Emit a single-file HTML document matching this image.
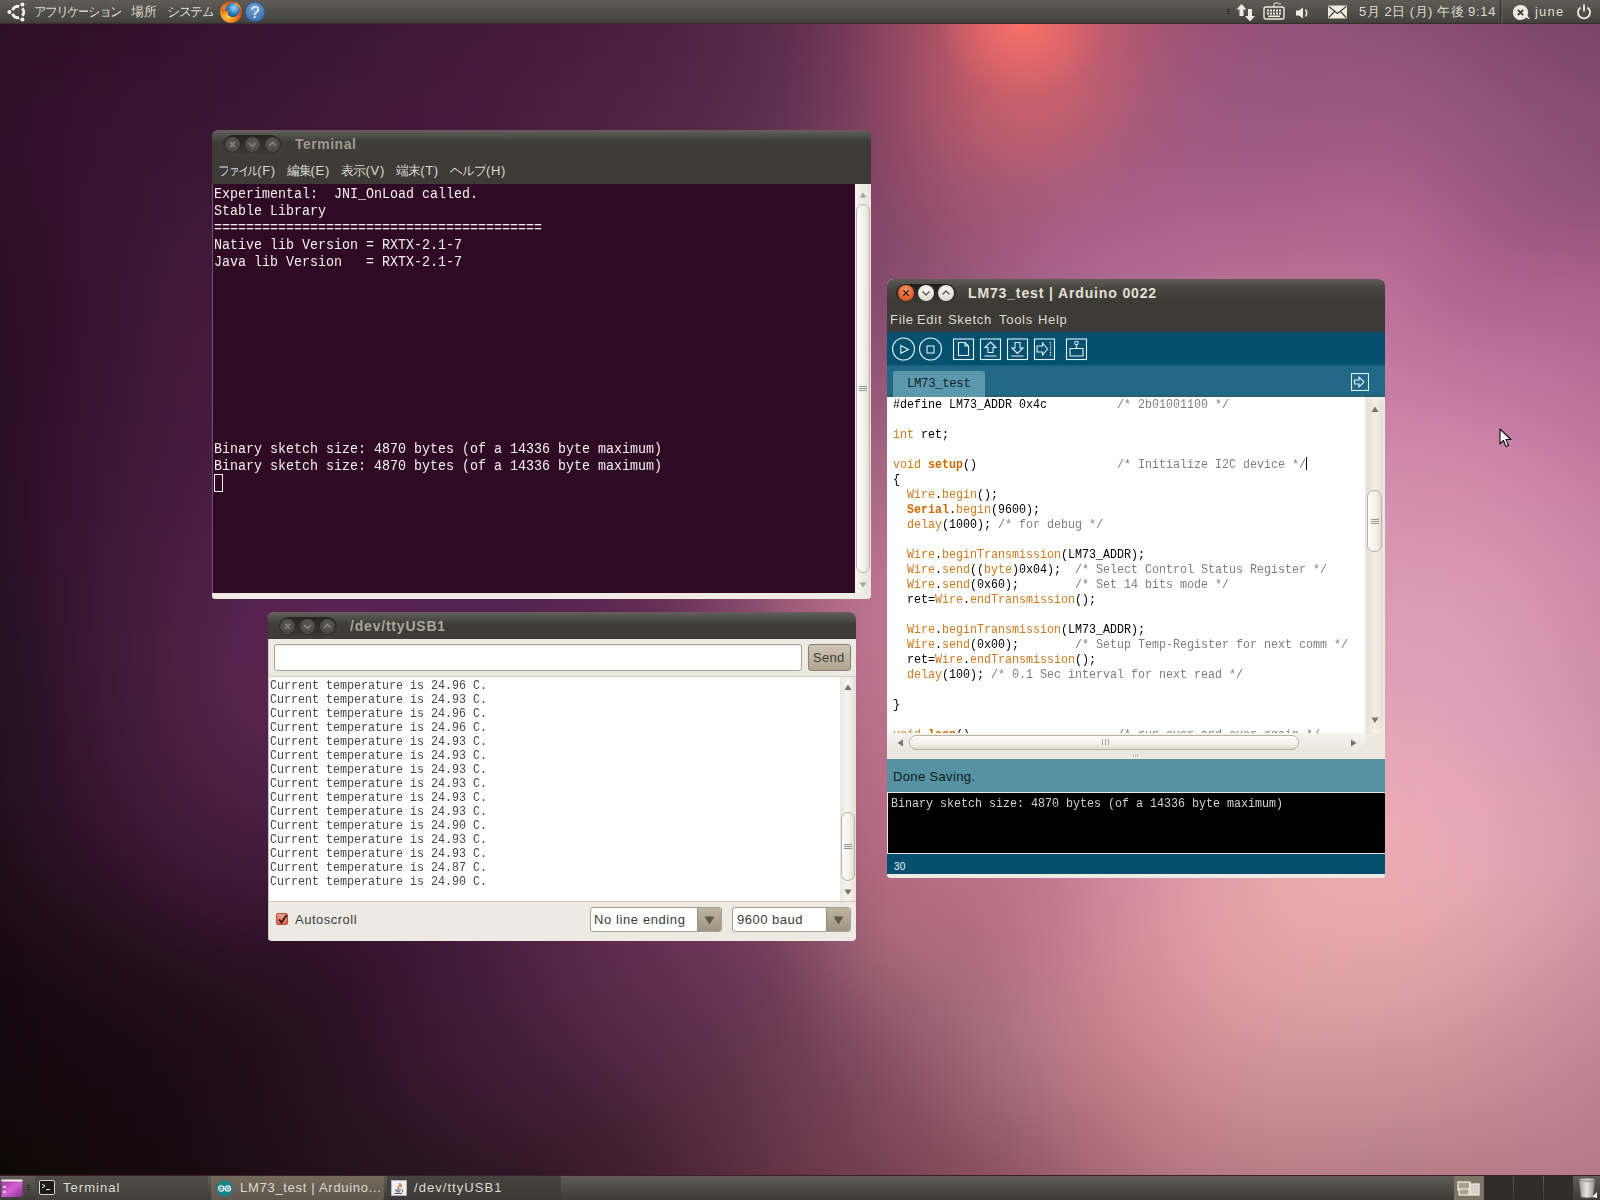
<!DOCTYPE html>
<html><head><meta charset="utf-8">
<style>
*{margin:0;padding:0;box-sizing:border-box}
html,body{width:1600px;height:1200px;overflow:hidden}
body{position:relative;font-family:"Liberation Sans",sans-serif;background:#3a1530}
.abs{position:absolute}
#bgw{position:absolute;left:0;top:0;width:1600px;height:1200px;overflow:hidden}
#bgi{position:absolute;left:-100px;top:-100px;width:1800px;height:1400px;filter:blur(30px)}
#bgi div{position:absolute;left:0;width:1800px;height:50px}
#glow{position:absolute;left:0;top:0;width:1600px;height:1200px;
background:radial-gradient(ellipse 85px 75px at 1022px 22px, rgba(252,115,105,0.9) 0%, rgba(245,110,105,0.45) 50%, rgba(230,100,100,0) 100%),
radial-gradient(ellipse 170px 150px at 1015px 35px, rgba(235,105,105,0.3) 0%, rgba(220,100,105,0.12) 55%, rgba(200,90,105,0) 100%)}
#toppanel{left:0;top:0;width:1600px;height:24px;background:linear-gradient(#5f5c56 0px,#44433d 22px,#3c3a36 23px,#3c2c33 23px,#3c2c33 24px);color:#dfdbd2;font-size:13px}
#botpanel{left:0;top:1176px;width:1600px;height:24px;background:linear-gradient(#655a5c 0px,#655a5c 1px,#5a5a52 2px,#3d3c37 100%);box-shadow:0 -1px 0 #3a2128;color:#dfdbd2;font-size:13px}
.win{position:absolute;border-radius:6px 6px 0 0;overflow:hidden}
.titlebar{position:absolute;left:0;top:0;right:0;background:linear-gradient(#6e5a62 0px,#675c5c 1px,#555850 3px,#4a4a45 8px,#3d3c37 12px,#3c3b36 100%)}
.btns{position:absolute;height:19px;border-radius:10px;background:linear-gradient(#262520,#3b3a35);}
.wbtn{position:absolute;width:15px;height:15px;border-radius:50%;top:2px}
.ttl{position:absolute;font-weight:bold;font-size:14px}
.ptxt{position:absolute;top:3px;font-size:13px;color:#dfdbd2;white-space:nowrap;line-height:17px;letter-spacing:0.7px}
.j{display:inline-block;font-style:normal;overflow:hidden;vertical-align:top}
.tb{position:absolute;top:0;height:24px;border-radius:2px}
.mtxt{position:absolute;top:32px;font-size:13px;color:#dcd8d0;white-space:nowrap;line-height:17px;letter-spacing:0.7px}
.ib{background:radial-gradient(circle at 50% 40%,#5a5852,#46443f);box-shadow:0 0 0 0.5px #2a2925}
.stxt{position:absolute;font-size:13px;color:#3c3c3c;white-space:nowrap;line-height:17px}
.code .k{color:#cc7a1e}.code .f{color:#cc7a1e}.code .b{color:#cc6a00;font-weight:bold}.code .c{color:#7e7e7e}
.mono{font-family:"Liberation Mono",monospace;white-space:pre}
</style></head><body>
<!--BG--><div id="bgw"><div id="bgi"><div style="top:-25px;background:linear-gradient(90deg,rgb(31,10,24) 0px,rgb(34,11,27) 50px,rgb(38,12,30) 100px,rgb(41,13,33) 150px,rgb(43,14,36) 200px,rgb(46,15,38) 250px,rgb(48,15,40) 300px,rgb(50,16,43) 350px,rgb(52,17,45) 400px,rgb(55,18,47) 450px,rgb(57,19,49) 500px,rgb(60,21,51) 550px,rgb(63,22,53) 600px,rgb(66,24,56) 650px,rgb(70,26,58) 700px,rgb(75,29,60) 750px,rgb(81,33,64) 800px,rgb(90,39,68) 850px,rgb(102,45,74) 900px,rgb(118,53,81) 950px,rgb(136,61,86) 1000px,rgb(154,69,91) 1050px,rgb(168,75,94) 1100px,rgb(173,78,97) 1150px,rgb(169,77,100) 1200px,rgb(160,75,102) 1250px,rgb(151,73,104) 1300px,rgb(143,71,105) 1350px,rgb(137,70,105) 1400px,rgb(131,68,104) 1450px,rgb(126,66,102) 1500px,rgb(121,63,100) 1550px,rgb(116,61,96) 1600px,rgb(111,58,92) 1650px,rgb(107,55,89) 1700px,rgb(104,53,87) 1750px,rgb(102,52,85) 1800px)"></div><div style="top:25px;background:linear-gradient(90deg,rgb(33,11,26) 0px,rgb(36,12,29) 50px,rgb(40,14,33) 100px,rgb(43,15,35) 150px,rgb(45,15,38) 200px,rgb(48,16,40) 250px,rgb(50,17,43) 300px,rgb(52,17,45) 350px,rgb(54,18,47) 400px,rgb(56,19,49) 450px,rgb(59,20,52) 500px,rgb(62,22,54) 550px,rgb(65,23,56) 600px,rgb(68,25,58) 650px,rgb(71,27,60) 700px,rgb(74,30,62) 750px,rgb(80,34,65) 800px,rgb(88,39,70) 850px,rgb(101,46,76) 900px,rgb(118,55,84) 950px,rgb(139,64,91) 1000px,rgb(161,74,95) 1050px,rgb(181,82,98) 1100px,rgb(187,85,101) 1150px,rgb(178,83,104) 1200px,rgb(165,80,107) 1250px,rgb(154,77,110) 1300px,rgb(145,75,111) 1350px,rgb(140,74,111) 1400px,rgb(135,73,111) 1450px,rgb(131,71,109) 1500px,rgb(126,68,106) 1550px,rgb(121,65,102) 1600px,rgb(116,62,98) 1650px,rgb(112,59,94) 1700px,rgb(109,57,91) 1750px,rgb(107,56,89) 1800px)"></div><div style="top:75px;background:linear-gradient(90deg,rgb(34,12,28) 0px,rgb(38,13,32) 50px,rgb(42,15,35) 100px,rgb(45,16,38) 150px,rgb(48,17,41) 200px,rgb(50,17,43) 250px,rgb(52,18,45) 300px,rgb(54,19,47) 350px,rgb(56,20,50) 400px,rgb(59,21,52) 450px,rgb(61,22,54) 500px,rgb(64,23,56) 550px,rgb(67,25,58) 600px,rgb(69,26,60) 650px,rgb(72,28,62) 700px,rgb(75,31,64) 750px,rgb(79,35,66) 800px,rgb(86,40,70) 850px,rgb(98,47,78) 900px,rgb(118,57,89) 950px,rgb(140,68,97) 1000px,rgb(166,78,99) 1050px,rgb(196,90,101) 1100px,rgb(203,93,104) 1150px,rgb(184,88,109) 1200px,rgb(166,83,112) 1250px,rgb(154,80,115) 1300px,rgb(147,79,117) 1350px,rgb(143,79,118) 1400px,rgb(140,78,117) 1450px,rgb(137,76,116) 1500px,rgb(133,74,112) 1550px,rgb(128,71,108) 1600px,rgb(122,67,104) 1650px,rgb(117,64,99) 1700px,rgb(114,62,97) 1750px,rgb(113,61,95) 1800px)"></div><div style="top:125px;background:linear-gradient(90deg,rgb(36,12,30) 0px,rgb(40,14,34) 50px,rgb(45,16,38) 100px,rgb(48,17,41) 150px,rgb(50,18,43) 200px,rgb(52,18,45) 250px,rgb(54,19,48) 300px,rgb(57,20,50) 350px,rgb(59,21,52) 400px,rgb(61,22,54) 450px,rgb(64,23,56) 500px,rgb(66,24,59) 550px,rgb(69,26,61) 600px,rgb(72,28,63) 650px,rgb(75,30,65) 700px,rgb(77,33,66) 750px,rgb(80,36,68) 800px,rgb(86,41,72) 850px,rgb(98,48,80) 900px,rgb(119,60,92) 950px,rgb(142,71,101) 1000px,rgb(167,81,102) 1050px,rgb(204,95,103) 1100px,rgb(210,98,106) 1150px,rgb(184,90,112) 1200px,rgb(165,86,117) 1250px,rgb(154,84,121) 1300px,rgb(149,84,123) 1350px,rgb(147,83,123) 1400px,rgb(147,83,123) 1450px,rgb(145,82,122) 1500px,rgb(141,79,119) 1550px,rgb(135,76,115) 1600px,rgb(130,73,111) 1650px,rgb(125,70,107) 1700px,rgb(122,68,104) 1750px,rgb(120,66,102) 1800px)"></div><div style="top:175px;background:linear-gradient(90deg,rgb(36,12,31) 0px,rgb(42,14,36) 50px,rgb(47,16,41) 100px,rgb(50,18,44) 150px,rgb(53,19,46) 200px,rgb(55,20,48) 250px,rgb(57,21,50) 300px,rgb(59,21,52) 350px,rgb(62,22,55) 400px,rgb(64,23,57) 450px,rgb(67,24,59) 500px,rgb(69,25,61) 550px,rgb(71,27,63) 600px,rgb(75,30,65) 650px,rgb(77,33,67) 700px,rgb(79,35,69) 750px,rgb(82,38,71) 800px,rgb(88,43,75) 850px,rgb(100,51,82) 900px,rgb(121,62,94) 950px,rgb(145,73,102) 1000px,rgb(171,85,105) 1050px,rgb(196,95,106) 1100px,rgb(199,97,108) 1150px,rgb(181,92,113) 1200px,rgb(164,89,121) 1250px,rgb(156,89,127) 1300px,rgb(152,88,128) 1350px,rgb(153,87,128) 1400px,rgb(154,88,128) 1450px,rgb(153,87,127) 1500px,rgb(148,85,125) 1550px,rgb(142,81,121) 1600px,rgb(138,79,119) 1650px,rgb(135,78,117) 1700px,rgb(130,74,112) 1750px,rgb(127,71,108) 1800px)"></div><div style="top:225px;background:linear-gradient(90deg,rgb(36,12,31) 0px,rgb(42,14,36) 50px,rgb(47,16,41) 100px,rgb(51,18,45) 150px,rgb(54,20,48) 200px,rgb(57,21,50) 250px,rgb(60,22,53) 300px,rgb(62,23,55) 350px,rgb(64,23,57) 400px,rgb(67,24,59) 450px,rgb(68,25,61) 500px,rgb(70,26,62) 550px,rgb(73,28,64) 600px,rgb(76,31,67) 650px,rgb(79,34,70) 700px,rgb(82,37,72) 750px,rgb(86,41,75) 800px,rgb(92,46,79) 850px,rgb(104,54,86) 900px,rgb(123,64,96) 950px,rgb(144,75,104) 1000px,rgb(166,85,109) 1050px,rgb(181,92,111) 1100px,rgb(182,93,114) 1150px,rgb(172,91,119) 1200px,rgb(163,91,126) 1250px,rgb(159,92,131) 1300px,rgb(158,91,132) 1350px,rgb(159,91,132) 1400px,rgb(161,92,132) 1450px,rgb(160,92,132) 1500px,rgb(155,89,130) 1550px,rgb(148,84,126) 1600px,rgb(142,81,122) 1650px,rgb(138,79,119) 1700px,rgb(136,77,116) 1750px,rgb(134,75,113) 1800px)"></div><div style="top:275px;background:linear-gradient(90deg,rgb(34,12,29) 0px,rgb(40,14,35) 50px,rgb(46,16,40) 100px,rgb(51,18,44) 150px,rgb(55,20,48) 200px,rgb(59,22,52) 250px,rgb(62,23,55) 300px,rgb(65,24,57) 350px,rgb(67,24,59) 400px,rgb(68,25,61) 450px,rgb(70,25,62) 500px,rgb(71,26,63) 550px,rgb(73,28,65) 600px,rgb(76,31,68) 650px,rgb(80,35,71) 700px,rgb(84,39,74) 750px,rgb(90,44,78) 800px,rgb(97,50,83) 850px,rgb(109,57,90) 900px,rgb(124,66,99) 950px,rgb(140,75,106) 1000px,rgb(153,82,111) 1050px,rgb(164,88,117) 1100px,rgb(168,91,125) 1150px,rgb(165,92,131) 1200px,rgb(165,94,135) 1250px,rgb(166,96,136) 1300px,rgb(166,96,136) 1350px,rgb(168,96,136) 1400px,rgb(170,98,138) 1450px,rgb(169,98,139) 1500px,rgb(162,93,135) 1550px,rgb(154,88,130) 1600px,rgb(147,83,125) 1650px,rgb(142,80,120) 1700px,rgb(143,80,119) 1750px,rgb(142,80,118) 1800px)"></div><div style="top:325px;background:linear-gradient(90deg,rgb(32,11,27) 0px,rgb(38,13,32) 50px,rgb(43,15,37) 100px,rgb(50,18,43) 150px,rgb(56,20,48) 200px,rgb(61,22,53) 250px,rgb(65,24,57) 300px,rgb(68,25,60) 350px,rgb(69,25,62) 400px,rgb(70,25,63) 450px,rgb(71,26,64) 500px,rgb(71,26,65) 550px,rgb(73,28,66) 600px,rgb(77,32,69) 650px,rgb(81,36,73) 700px,rgb(87,41,77) 750px,rgb(94,47,82) 800px,rgb(102,54,88) 850px,rgb(113,61,94) 900px,rgb(125,69,101) 950px,rgb(136,75,107) 1000px,rgb(146,81,113) 1050px,rgb(158,89,124) 1100px,rgb(166,95,134) 1150px,rgb(168,98,140) 1200px,rgb(172,101,143) 1250px,rgb(175,104,143) 1300px,rgb(177,105,143) 1350px,rgb(179,105,144) 1400px,rgb(181,107,146) 1450px,rgb(180,106,147) 1500px,rgb(170,99,140) 1550px,rgb(163,93,135) 1600px,rgb(161,91,132) 1650px,rgb(160,91,131) 1700px,rgb(157,89,128) 1750px,rgb(153,87,125) 1800px)"></div><div style="top:375px;background:linear-gradient(90deg,rgb(30,10,26) 0px,rgb(36,12,30) 50px,rgb(42,15,36) 100px,rgb(49,17,42) 150px,rgb(56,20,49) 200px,rgb(62,23,55) 250px,rgb(67,24,59) 300px,rgb(70,25,62) 350px,rgb(71,26,64) 400px,rgb(72,26,65) 450px,rgb(72,26,66) 500px,rgb(72,27,66) 550px,rgb(74,29,68) 600px,rgb(78,32,71) 650px,rgb(83,38,75) 700px,rgb(90,44,80) 750px,rgb(98,50,85) 800px,rgb(108,58,92) 850px,rgb(118,65,99) 900px,rgb(129,73,105) 950px,rgb(138,79,112) 1000px,rgb(148,86,119) 1050px,rgb(159,94,130) 1100px,rgb(169,101,141) 1150px,rgb(175,106,147) 1200px,rgb(180,109,149) 1250px,rgb(184,112,150) 1300px,rgb(187,114,151) 1350px,rgb(189,115,152) 1400px,rgb(190,115,153) 1450px,rgb(186,112,152) 1500px,rgb(176,104,144) 1550px,rgb(172,101,142) 1600px,rgb(173,101,141) 1650px,rgb(173,100,140) 1700px,rgb(169,97,136) 1750px,rgb(163,94,132) 1800px)"></div><div style="top:425px;background:linear-gradient(90deg,rgb(29,9,24) 0px,rgb(35,12,29) 50px,rgb(41,14,35) 100px,rgb(49,17,42) 150px,rgb(56,20,49) 200px,rgb(63,23,56) 250px,rgb(69,25,61) 300px,rgb(72,26,65) 350px,rgb(73,27,67) 400px,rgb(74,27,68) 450px,rgb(74,28,68) 500px,rgb(74,28,69) 550px,rgb(76,30,70) 600px,rgb(80,34,73) 650px,rgb(86,40,78) 700px,rgb(94,46,83) 750px,rgb(104,54,89) 800px,rgb(114,62,96) 850px,rgb(125,71,104) 900px,rgb(135,79,111) 950px,rgb(145,86,118) 1000px,rgb(155,93,127) 1050px,rgb(165,101,136) 1100px,rgb(174,107,145) 1150px,rgb(180,113,151) 1200px,rgb(186,117,154) 1250px,rgb(190,120,156) 1300px,rgb(194,122,157) 1350px,rgb(196,123,159) 1400px,rgb(196,122,159) 1450px,rgb(192,119,157) 1500px,rgb(186,114,153) 1550px,rgb(183,112,152) 1600px,rgb(181,110,150) 1650px,rgb(179,107,146) 1700px,rgb(175,104,142) 1750px,rgb(170,100,138) 1800px)"></div><div style="top:475px;background:linear-gradient(90deg,rgb(28,9,24) 0px,rgb(34,11,29) 50px,rgb(41,14,36) 100px,rgb(49,17,43) 150px,rgb(57,21,51) 200px,rgb(64,24,57) 250px,rgb(70,26,63) 300px,rgb(74,28,67) 350px,rgb(76,28,70) 400px,rgb(76,29,71) 450px,rgb(77,29,71) 500px,rgb(77,30,72) 550px,rgb(79,32,73) 600px,rgb(83,36,76) 650px,rgb(90,42,80) 700px,rgb(98,49,86) 750px,rgb(109,58,93) 800px,rgb(121,67,101) 850px,rgb(133,77,109) 900px,rgb(145,86,117) 950px,rgb(155,94,125) 1000px,rgb(164,101,134) 1050px,rgb(172,108,142) 1100px,rgb(179,114,149) 1150px,rgb(185,119,155) 1200px,rgb(190,123,158) 1250px,rgb(195,126,161) 1300px,rgb(199,129,163) 1350px,rgb(201,130,164) 1400px,rgb(201,130,164) 1450px,rgb(199,128,164) 1500px,rgb(197,126,162) 1550px,rgb(193,123,161) 1600px,rgb(189,119,157) 1650px,rgb(184,114,152) 1700px,rgb(180,110,147) 1750px,rgb(176,106,143) 1800px)"></div><div style="top:525px;background:linear-gradient(90deg,rgb(27,9,23) 0px,rgb(34,11,29) 50px,rgb(42,14,36) 100px,rgb(50,18,44) 150px,rgb(58,21,52) 200px,rgb(65,24,59) 250px,rgb(71,27,65) 300px,rgb(76,29,70) 350px,rgb(78,30,72) 400px,rgb(79,31,74) 450px,rgb(79,31,74) 500px,rgb(80,32,75) 550px,rgb(82,34,76) 600px,rgb(86,38,79) 650px,rgb(92,43,83) 700px,rgb(102,51,88) 750px,rgb(114,61,96) 800px,rgb(128,72,105) 850px,rgb(142,83,115) 900px,rgb(155,94,124) 950px,rgb(165,102,132) 1000px,rgb(173,109,140) 1050px,rgb(179,114,146) 1100px,rgb(184,119,153) 1150px,rgb(189,124,158) 1200px,rgb(194,128,162) 1250px,rgb(198,131,165) 1300px,rgb(202,134,167) 1350px,rgb(205,136,169) 1400px,rgb(207,137,170) 1450px,rgb(206,137,169) 1500px,rgb(205,135,168) 1550px,rgb(202,132,166) 1600px,rgb(197,127,162) 1650px,rgb(191,122,157) 1700px,rgb(186,117,153) 1750px,rgb(181,112,148) 1800px)"></div><div style="top:575px;background:linear-gradient(90deg,rgb(26,9,22) 0px,rgb(33,11,29) 50px,rgb(41,15,36) 100px,rgb(50,18,45) 150px,rgb(59,22,53) 200px,rgb(67,26,61) 250px,rgb(74,28,67) 300px,rgb(78,31,72) 350px,rgb(81,32,75) 400px,rgb(82,33,77) 450px,rgb(82,33,77) 500px,rgb(82,34,78) 550px,rgb(84,36,78) 600px,rgb(87,39,80) 650px,rgb(94,44,84) 700px,rgb(104,51,89) 750px,rgb(117,62,98) 800px,rgb(134,75,108) 850px,rgb(151,89,119) 900px,rgb(165,101,130) 950px,rgb(176,110,138) 1000px,rgb(181,115,145) 1050px,rgb(185,119,150) 1100px,rgb(188,123,155) 1150px,rgb(192,127,159) 1200px,rgb(196,132,164) 1250px,rgb(201,135,167) 1300px,rgb(205,139,170) 1350px,rgb(209,142,172) 1400px,rgb(211,143,174) 1450px,rgb(212,144,174) 1500px,rgb(211,143,173) 1550px,rgb(209,140,171) 1600px,rgb(204,135,167) 1650px,rgb(198,129,163) 1700px,rgb(192,123,158) 1750px,rgb(187,118,152) 1800px)"></div><div style="top:625px;background:linear-gradient(90deg,rgb(25,9,21) 0px,rgb(32,12,28) 50px,rgb(41,15,36) 100px,rgb(50,19,45) 150px,rgb(60,23,54) 200px,rgb(69,27,62) 250px,rgb(76,30,69) 300px,rgb(81,32,75) 350px,rgb(84,34,78) 400px,rgb(85,34,79) 450px,rgb(84,34,79) 500px,rgb(84,35,79) 550px,rgb(85,36,79) 600px,rgb(87,38,81) 650px,rgb(93,42,83) 700px,rgb(103,50,89) 750px,rgb(118,62,98) 800px,rgb(137,77,110) 850px,rgb(158,94,123) 900px,rgb(175,108,135) 950px,rgb(185,117,143) 1000px,rgb(189,120,148) 1050px,rgb(189,122,152) 1100px,rgb(190,124,155) 1150px,rgb(193,128,160) 1200px,rgb(197,133,164) 1250px,rgb(202,138,168) 1300px,rgb(207,143,172) 1350px,rgb(212,146,175) 1400px,rgb(214,149,177) 1450px,rgb(216,150,178) 1500px,rgb(215,149,178) 1550px,rgb(213,147,176) 1600px,rgb(209,142,172) 1650px,rgb(203,135,167) 1700px,rgb(197,129,162) 1750px,rgb(191,123,156) 1800px)"></div><div style="top:675px;background:linear-gradient(90deg,rgb(23,9,20) 0px,rgb(30,12,27) 50px,rgb(39,16,35) 100px,rgb(49,20,44) 150px,rgb(60,24,54) 200px,rgb(70,28,63) 250px,rgb(79,32,71) 300px,rgb(84,34,77) 350px,rgb(87,35,80) 400px,rgb(87,35,80) 450px,rgb(86,35,80) 500px,rgb(85,35,80) 550px,rgb(84,35,79) 600px,rgb(86,36,80) 650px,rgb(91,39,82) 700px,rgb(100,46,87) 750px,rgb(116,58,96) 800px,rgb(138,76,109) 850px,rgb(162,96,124) 900px,rgb(183,113,138) 950px,rgb(193,121,146) 1000px,rgb(192,121,149) 1050px,rgb(190,121,151) 1100px,rgb(190,123,154) 1150px,rgb(193,127,158) 1200px,rgb(198,133,163) 1250px,rgb(204,140,168) 1300px,rgb(209,146,173) 1350px,rgb(214,150,177) 1400px,rgb(218,154,180) 1450px,rgb(219,155,181) 1500px,rgb(218,154,181) 1550px,rgb(216,151,179) 1600px,rgb(211,146,175) 1650px,rgb(206,139,170) 1700px,rgb(200,133,163) 1750px,rgb(193,127,157) 1800px)"></div><div style="top:725px;background:linear-gradient(90deg,rgb(21,9,19) 0px,rgb(29,12,25) 50px,rgb(37,16,33) 100px,rgb(48,20,43) 150px,rgb(60,25,53) 200px,rgb(71,29,63) 250px,rgb(81,33,72) 300px,rgb(87,35,78) 350px,rgb(89,36,80) 400px,rgb(88,35,81) 450px,rgb(86,35,80) 500px,rgb(84,34,79) 550px,rgb(83,34,78) 600px,rgb(84,34,78) 650px,rgb(88,36,79) 700px,rgb(96,41,83) 750px,rgb(111,53,91) 800px,rgb(135,72,106) 850px,rgb(162,95,123) 900px,rgb(185,113,138) 950px,rgb(194,121,146) 1000px,rgb(191,119,147) 1050px,rgb(187,116,148) 1100px,rgb(188,119,151) 1150px,rgb(192,125,156) 1200px,rgb(198,133,162) 1250px,rgb(205,141,168) 1300px,rgb(212,148,173) 1350px,rgb(217,154,178) 1400px,rgb(221,158,181) 1450px,rgb(222,159,183) 1500px,rgb(221,158,184) 1550px,rgb(218,154,181) 1600px,rgb(213,148,176) 1650px,rgb(207,142,170) 1700px,rgb(201,135,164) 1750px,rgb(195,130,158) 1800px)"></div><div style="top:775px;background:linear-gradient(90deg,rgb(20,9,18) 0px,rgb(27,12,24) 50px,rgb(36,16,32) 100px,rgb(47,20,41) 150px,rgb(59,24,52) 200px,rgb(71,29,62) 250px,rgb(81,33,71) 300px,rgb(87,35,77) 350px,rgb(88,36,79) 400px,rgb(87,35,79) 450px,rgb(84,33,78) 500px,rgb(82,32,77) 550px,rgb(82,32,76) 600px,rgb(83,32,76) 650px,rgb(86,33,77) 700px,rgb(92,37,80) 750px,rgb(106,48,88) 800px,rgb(131,69,103) 850px,rgb(159,92,121) 900px,rgb(181,111,135) 950px,rgb(191,118,143) 1000px,rgb(189,115,144) 1050px,rgb(184,112,144) 1100px,rgb(186,116,148) 1150px,rgb(193,125,154) 1200px,rgb(200,134,161) 1250px,rgb(208,144,168) 1300px,rgb(215,152,173) 1350px,rgb(221,158,178) 1400px,rgb(225,162,182) 1450px,rgb(226,163,184) 1500px,rgb(224,161,185) 1550px,rgb(220,156,183) 1600px,rgb(214,150,177) 1650px,rgb(208,144,170) 1700px,rgb(202,138,164) 1750px,rgb(196,133,158) 1800px)"></div><div style="top:825px;background:linear-gradient(90deg,rgb(20,8,17) 0px,rgb(27,11,23) 50px,rgb(35,15,31) 100px,rgb(46,19,40) 150px,rgb(57,23,50) 200px,rgb(68,28,60) 250px,rgb(78,31,68) 300px,rgb(83,34,74) 350px,rgb(84,34,76) 400px,rgb(83,33,76) 450px,rgb(81,31,75) 500px,rgb(80,31,74) 550px,rgb(80,30,74) 600px,rgb(82,31,75) 650px,rgb(86,33,76) 700px,rgb(94,38,80) 750px,rgb(108,49,89) 800px,rgb(131,68,102) 850px,rgb(157,90,119) 900px,rgb(179,108,133) 950px,rgb(189,116,140) 1000px,rgb(188,114,141) 1050px,rgb(186,113,142) 1100px,rgb(189,117,147) 1150px,rgb(196,126,154) 1200px,rgb(204,137,161) 1250px,rgb(212,147,168) 1300px,rgb(219,156,173) 1350px,rgb(225,162,177) 1400px,rgb(229,166,181) 1450px,rgb(230,166,184) 1500px,rgb(228,164,185) 1550px,rgb(224,160,183) 1600px,rgb(217,154,178) 1650px,rgb(210,148,170) 1700px,rgb(203,141,164) 1750px,rgb(197,136,158) 1800px)"></div><div style="top:875px;background:linear-gradient(90deg,rgb(19,8,16) 0px,rgb(27,10,22) 50px,rgb(35,14,30) 100px,rgb(44,17,38) 150px,rgb(54,22,46) 200px,rgb(64,26,55) 250px,rgb(72,29,63) 300px,rgb(77,31,68) 350px,rgb(78,31,70) 400px,rgb(76,30,70) 450px,rgb(76,29,70) 500px,rgb(76,29,70) 550px,rgb(79,30,72) 600px,rgb(83,32,74) 650px,rgb(88,35,77) 700px,rgb(97,42,82) 750px,rgb(111,52,90) 800px,rgb(130,68,102) 850px,rgb(154,88,116) 900px,rgb(175,105,130) 950px,rgb(186,113,137) 1000px,rgb(188,114,139) 1050px,rgb(189,114,141) 1100px,rgb(193,120,146) 1150px,rgb(200,130,154) 1200px,rgb(209,141,161) 1250px,rgb(217,152,168) 1300px,rgb(224,160,172) 1350px,rgb(230,166,176) 1400px,rgb(233,170,179) 1450px,rgb(233,170,182) 1500px,rgb(231,168,184) 1550px,rgb(227,163,182) 1600px,rgb(220,158,177) 1650px,rgb(212,152,170) 1700px,rgb(205,145,163) 1750px,rgb(198,138,157) 1800px)"></div><div style="top:925px;background:linear-gradient(90deg,rgb(19,7,15) 0px,rgb(26,9,21) 50px,rgb(33,12,27) 100px,rgb(41,15,34) 150px,rgb(49,19,41) 200px,rgb(57,23,49) 250px,rgb(65,26,56) 300px,rgb(69,27,61) 350px,rgb(69,27,61) 400px,rgb(68,26,61) 450px,rgb(69,26,63) 500px,rgb(72,28,66) 550px,rgb(77,30,69) 600px,rgb(83,34,73) 650px,rgb(91,38,77) 700px,rgb(100,45,83) 750px,rgb(111,54,90) 800px,rgb(127,67,100) 850px,rgb(148,84,113) 900px,rgb(170,101,125) 950px,rgb(182,111,132) 1000px,rgb(186,112,135) 1050px,rgb(188,114,137) 1100px,rgb(194,121,144) 1150px,rgb(204,133,153) 1200px,rgb(213,145,162) 1250px,rgb(221,156,168) 1300px,rgb(228,164,171) 1350px,rgb(232,170,173) 1400px,rgb(235,172,176) 1450px,rgb(235,172,179) 1500px,rgb(232,170,181) 1550px,rgb(228,166,180) 1600px,rgb(221,160,175) 1650px,rgb(212,154,168) 1700px,rgb(205,146,161) 1750px,rgb(198,139,155) 1800px)"></div><div style="top:975px;background:linear-gradient(90deg,rgb(17,7,13) 0px,rgb(23,8,18) 50px,rgb(29,11,23) 100px,rgb(35,13,28) 150px,rgb(41,16,34) 200px,rgb(48,19,40) 250px,rgb(55,22,47) 300px,rgb(59,23,51) 350px,rgb(58,22,50) 400px,rgb(58,22,52) 450px,rgb(62,24,56) 500px,rgb(68,27,61) 550px,rgb(76,31,67) 600px,rgb(84,36,72) 650px,rgb(92,41,77) 700px,rgb(101,47,82) 750px,rgb(109,53,88) 800px,rgb(120,63,95) 850px,rgb(139,79,106) 900px,rgb(164,99,120) 950px,rgb(178,109,128) 1000px,rgb(180,110,130) 1050px,rgb(184,112,133) 1100px,rgb(193,121,141) 1150px,rgb(205,134,152) 1200px,rgb(215,147,161) 1250px,rgb(223,157,166) 1300px,rgb(228,165,169) 1350px,rgb(232,170,170) 1400px,rgb(233,172,172) 1450px,rgb(233,171,175) 1500px,rgb(230,168,176) 1550px,rgb(226,164,175) 1600px,rgb(218,158,170) 1650px,rgb(210,152,164) 1700px,rgb(203,144,158) 1750px,rgb(197,137,152) 1800px)"></div><div style="top:1025px;background:linear-gradient(90deg,rgb(15,6,11) 0px,rgb(20,8,15) 50px,rgb(24,10,18) 100px,rgb(29,11,22) 150px,rgb(33,13,26) 200px,rgb(38,15,30) 250px,rgb(43,17,35) 300px,rgb(46,18,38) 350px,rgb(46,18,38) 400px,rgb(50,19,43) 450px,rgb(56,22,49) 500px,rgb(65,26,57) 550px,rgb(73,31,63) 600px,rgb(82,37,69) 650px,rgb(92,42,75) 700px,rgb(100,48,80) 750px,rgb(104,51,84) 800px,rgb(110,57,89) 850px,rgb(124,69,97) 900px,rgb(156,94,113) 950px,rgb(171,107,123) 1000px,rgb(170,106,126) 1050px,rgb(178,112,131) 1100px,rgb(190,122,139) 1150px,rgb(203,134,148) 1200px,rgb(214,146,156) 1250px,rgb(220,155,162) 1300px,rgb(225,162,166) 1350px,rgb(227,166,168) 1400px,rgb(228,167,169) 1450px,rgb(227,166,170) 1500px,rgb(224,163,170) 1550px,rgb(219,158,168) 1600px,rgb(213,152,163) 1650px,rgb(205,145,158) 1700px,rgb(199,139,153) 1750px,rgb(194,134,149) 1800px)"></div><div style="top:1075px;background:linear-gradient(90deg,rgb(14,6,9) 0px,rgb(18,8,13) 50px,rgb(21,9,16) 100px,rgb(24,10,18) 150px,rgb(27,11,20) 200px,rgb(30,12,22) 250px,rgb(34,13,26) 300px,rgb(37,14,29) 350px,rgb(40,16,32) 400px,rgb(46,18,38) 450px,rgb(54,22,46) 500px,rgb(62,26,53) 550px,rgb(70,31,59) 600px,rgb(78,35,65) 650px,rgb(87,41,70) 700px,rgb(94,45,75) 750px,rgb(98,49,79) 800px,rgb(103,54,83) 850px,rgb(116,65,90) 900px,rgb(139,83,102) 950px,rgb(155,95,114) 1000px,rgb(162,103,122) 1050px,rgb(173,113,130) 1100px,rgb(187,122,136) 1150px,rgb(199,132,143) 1200px,rgb(209,141,150) 1250px,rgb(215,150,157) 1300px,rgb(218,156,161) 1350px,rgb(220,159,163) 1400px,rgb(220,160,164) 1450px,rgb(218,159,164) 1500px,rgb(216,155,163) 1550px,rgb(212,150,160) 1600px,rgb(206,144,156) 1650px,rgb(200,138,152) 1700px,rgb(195,133,148) 1750px,rgb(191,129,145) 1800px)"></div><div style="top:1125px;background:linear-gradient(90deg,rgb(13,6,8) 0px,rgb(17,8,12) 50px,rgb(20,9,15) 100px,rgb(22,10,16) 150px,rgb(24,10,17) 200px,rgb(26,10,18) 250px,rgb(29,12,21) 300px,rgb(33,13,25) 350px,rgb(38,15,30) 400px,rgb(44,18,36) 450px,rgb(52,22,44) 500px,rgb(59,25,50) 550px,rgb(65,29,54) 600px,rgb(72,33,59) 650px,rgb(79,37,64) 700px,rgb(86,42,69) 750px,rgb(93,47,73) 800px,rgb(100,53,77) 850px,rgb(111,62,83) 900px,rgb(126,73,92) 950px,rgb(142,84,104) 1000px,rgb(155,98,116) 1050px,rgb(169,112,127) 1100px,rgb(181,120,132) 1150px,rgb(193,127,137) 1200px,rgb(202,136,144) 1250px,rgb(207,143,150) 1300px,rgb(210,148,155) 1350px,rgb(211,151,157) 1400px,rgb(210,151,157) 1450px,rgb(209,150,156) 1500px,rgb(207,147,155) 1550px,rgb(203,142,153) 1600px,rgb(199,137,150) 1650px,rgb(195,132,147) 1700px,rgb(191,128,144) 1750px,rgb(188,125,141) 1800px)"></div><div style="top:1175px;background:linear-gradient(90deg,rgb(11,6,6) 0px,rgb(15,8,10) 50px,rgb(19,9,13) 100px,rgb(21,9,14) 150px,rgb(22,10,15) 200px,rgb(24,10,17) 250px,rgb(27,11,19) 300px,rgb(31,13,23) 350px,rgb(36,15,28) 400px,rgb(42,18,35) 450px,rgb(49,21,41) 500px,rgb(54,24,45) 550px,rgb(58,27,48) 600px,rgb(64,29,52) 650px,rgb(70,33,56) 700px,rgb(78,38,61) 750px,rgb(87,44,67) 800px,rgb(97,51,72) 850px,rgb(107,59,78) 900px,rgb(119,68,86) 950px,rgb(132,77,96) 1000px,rgb(146,89,107) 1050px,rgb(159,102,117) 1100px,rgb(172,111,123) 1150px,rgb(183,120,130) 1200px,rgb(193,128,137) 1250px,rgb(198,135,143) 1300px,rgb(201,140,147) 1350px,rgb(201,142,149) 1400px,rgb(200,141,149) 1450px,rgb(199,140,148) 1500px,rgb(197,138,147) 1550px,rgb(195,135,146) 1600px,rgb(193,131,144) 1650px,rgb(190,128,142) 1700px,rgb(187,125,140) 1750px,rgb(184,122,138) 1800px)"></div><div style="top:1225px;background:linear-gradient(90deg,rgb(10,5,3) 0px,rgb(14,7,7) 50px,rgb(17,8,9) 100px,rgb(19,9,11) 150px,rgb(21,9,13) 200px,rgb(23,10,15) 250px,rgb(26,12,18) 300px,rgb(29,13,22) 350px,rgb(33,15,26) 400px,rgb(38,18,31) 450px,rgb(43,20,35) 500px,rgb(47,22,38) 550px,rgb(51,24,41) 600px,rgb(55,26,44) 650px,rgb(61,29,47) 700px,rgb(71,35,53) 750px,rgb(82,42,60) 800px,rgb(94,49,67) 850px,rgb(105,57,74) 900px,rgb(115,64,81) 950px,rgb(125,71,89) 1000px,rgb(136,79,96) 1050px,rgb(147,88,103) 1100px,rgb(160,99,112) 1150px,rgb(172,109,120) 1200px,rgb(182,119,129) 1250px,rgb(189,126,136) 1300px,rgb(191,130,139) 1350px,rgb(191,132,141) 1400px,rgb(190,131,140) 1450px,rgb(188,130,140) 1500px,rgb(188,129,139) 1550px,rgb(188,128,139) 1600px,rgb(187,126,139) 1650px,rgb(186,124,138) 1700px,rgb(184,121,136) 1750px,rgb(181,118,134) 1800px)"></div><div style="top:1275px;background:linear-gradient(90deg,rgb(8,4,0) 0px,rgb(11,6,3) 50px,rgb(14,7,6) 100px,rgb(17,8,8) 150px,rgb(19,9,11) 200px,rgb(22,10,13) 250px,rgb(24,11,16) 300px,rgb(27,13,19) 350px,rgb(30,15,22) 400px,rgb(33,17,25) 450px,rgb(37,19,28) 500px,rgb(40,20,32) 550px,rgb(44,21,34) 600px,rgb(49,23,37) 650px,rgb(55,26,40) 700px,rgb(65,32,47) 750px,rgb(77,39,54) 800px,rgb(89,46,61) 850px,rgb(101,53,69) 900px,rgb(110,59,75) 950px,rgb(118,64,82) 1000px,rgb(127,70,87) 1050px,rgb(137,77,93) 1100px,rgb(149,88,102) 1150px,rgb(161,99,111) 1200px,rgb(171,109,120) 1250px,rgb(178,116,127) 1300px,rgb(181,121,131) 1350px,rgb(181,122,132) 1400px,rgb(180,122,132) 1450px,rgb(179,121,132) 1500px,rgb(180,121,132) 1550px,rgb(180,121,133) 1600px,rgb(181,120,133) 1650px,rgb(181,119,133) 1700px,rgb(179,117,132) 1750px,rgb(177,115,130) 1800px)"></div><div style="top:1325px;background:linear-gradient(90deg,rgb(5,3,0) 0px,rgb(9,5,0) 50px,rgb(12,6,3) 100px,rgb(14,7,5) 150px,rgb(17,8,8) 200px,rgb(19,9,11) 250px,rgb(22,10,13) 300px,rgb(24,12,16) 350px,rgb(27,13,18) 400px,rgb(29,15,21) 450px,rgb(32,17,23) 500px,rgb(36,18,26) 550px,rgb(39,19,29) 600px,rgb(44,21,32) 650px,rgb(51,25,36) 700px,rgb(61,30,41) 750px,rgb(72,36,48) 800px,rgb(83,42,55) 850px,rgb(94,48,62) 900px,rgb(103,54,69) 950px,rgb(112,58,74) 1000px,rgb(120,64,80) 1050px,rgb(129,71,86) 1100px,rgb(140,80,94) 1150px,rgb(151,89,103) 1200px,rgb(160,99,111) 1250px,rgb(167,106,117) 1300px,rgb(170,110,121) 1350px,rgb(172,113,124) 1400px,rgb(172,114,125) 1450px,rgb(172,114,125) 1500px,rgb(173,114,126) 1550px,rgb(174,114,127) 1600px,rgb(175,114,127) 1650px,rgb(175,114,128) 1700px,rgb(174,112,127) 1750px,rgb(173,111,126) 1800px)"></div><div style="top:1375px;background:linear-gradient(90deg,rgb(3,2,0) 0px,rgb(6,4,0) 50px,rgb(9,5,0) 100px,rgb(12,6,2) 150px,rgb(14,7,5) 200px,rgb(17,8,7) 250px,rgb(19,9,10) 300px,rgb(21,11,12) 350px,rgb(23,12,14) 400px,rgb(26,13,16) 450px,rgb(28,15,19) 500px,rgb(32,16,21) 550px,rgb(36,18,24) 600px,rgb(41,20,27) 650px,rgb(48,23,31) 700px,rgb(57,27,37) 750px,rgb(67,33,43) 800px,rgb(78,38,49) 850px,rgb(88,44,56) 900px,rgb(97,49,62) 950px,rgb(105,54,68) 1000px,rgb(113,59,74) 1050px,rgb(122,65,80) 1100px,rgb(132,73,87) 1150px,rgb(141,82,95) 1200px,rgb(150,90,102) 1250px,rgb(156,96,108) 1300px,rgb(160,101,113) 1350px,rgb(163,104,115) 1400px,rgb(164,106,117) 1450px,rgb(165,107,119) 1500px,rgb(166,108,120) 1550px,rgb(167,108,121) 1600px,rgb(168,108,122) 1650px,rgb(169,108,122) 1700px,rgb(169,107,122) 1750px,rgb(168,106,121) 1800px)"></div></div><div id="glow"></div></div><!--/BG-->

<!-- top panel -->
<div id="toppanel" class="abs">
  <svg class="abs" style="left:0;top:0" width="30" height="24" viewBox="0 0 30 24">
    <path d="M19.19 17.58 A5.7 5.7 0 0 1 12.58 13.76 M12.58 10.24 A5.7 5.7 0 0 1 19.19 6.42 M22.24 8.19 A5.7 5.7 0 0 1 22.24 15.81" fill="none" stroke="#f4f2ee" stroke-width="2.9"/>
    <circle cx="9.4" cy="12" r="2.05" fill="#f4f2ee"/>
    <circle cx="22.4" cy="4.5" r="2.05" fill="#f4f2ee"/>
    <circle cx="22.4" cy="19.5" r="2.05" fill="#f4f2ee"/>
  </svg>
  <div class="ptxt" style="left:34px"><i class="j" style="width:10.9px">ア</i><i class="j" style="width:10.9px">プ</i><i class="j" style="width:10.9px">リ</i><i class="j" style="width:10.9px">ケ</i><i class="j" style="width:10.9px">ー</i><i class="j" style="width:10.9px">シ</i><i class="j" style="width:10.9px">ョ</i><i class="j" style="width:10.9px">ン</i></div>
  <div class="ptxt" style="left:131px"><i class="j" style="width:12.5px">場</i><i class="j" style="width:12.5px">所</i></div>
  <div class="ptxt" style="left:167px"><i class="j" style="width:11.5px">シ</i><i class="j" style="width:11.5px">ス</i><i class="j" style="width:11.5px">テ</i><i class="j" style="width:11.5px">ム</i></div>
  <svg class="abs" style="left:219px;top:0px" width="24" height="24" viewBox="0 0 24 24">
    <defs><radialGradient id="ffg" cx="0.6" cy="0.35" r="0.65"><stop offset="0" stop-color="#9ad8f8"/><stop offset="0.55" stop-color="#3a88c8"/><stop offset="1" stop-color="#1d4a90"/></radialGradient>
    <radialGradient id="ffo" cx="0.35" cy="0.65" r="0.75"><stop offset="0" stop-color="#ffd850"/><stop offset="0.45" stop-color="#f59020"/><stop offset="1" stop-color="#c83410"/></radialGradient></defs>
    <circle cx="12" cy="12" r="10.8" fill="url(#ffo)"/>
    <circle cx="13.5" cy="10" r="7.2" fill="url(#ffg)"/>
    <path d="M2.5 9 C3 17 8 21.5 13.5 21 C18.5 20.5 21.5 17 22 13 C19.5 16.5 16 17.8 12.5 17 C9 16 8 13 9.5 11 C7.5 11.5 6 10.5 6.5 8.5 C5 9.5 3.8 9.8 2.5 9 Z" fill="url(#ffo)"/>
    <path d="M15.5 2.2 C19 3 21.8 6 22.5 10.5 C21 7.5 19 5.5 16.5 4.8 Z" fill="#f7a030"/>
  </svg>
  <svg class="abs" style="left:244px;top:1px" width="22" height="22" viewBox="0 0 22 22">
    <defs><radialGradient id="hg" cx="0.45" cy="0.35" r="0.65"><stop offset="0" stop-color="#7aa8d8"/><stop offset="1" stop-color="#3868a8"/></radialGradient></defs>
    <circle cx="11" cy="11" r="10" fill="url(#hg)" stroke="#2a5080" stroke-width="0.8"/>
    <text x="11" y="17" text-anchor="middle" font-family="Liberation Sans" font-size="16" fill="#f4f8fc">?</text>
  </svg>
  <div class="abs" style="left:1227px;top:9px;width:3px;height:1px;background:#2a2a26;box-shadow:0 2px 0 #2a2a26,0 4px 0 #2a2a26"></div>
  <svg class="abs" style="left:1236px;top:3px" width="20" height="19" viewBox="0 0 20 19">
    <path d="M5.5 1 L10.5 6.5 L7.5 6.5 L7.5 13 L3.5 13 L3.5 6.5 L0.5 6.5 Z" fill="#f0ebe0"/>
    <path d="M14 18.5 L9 13 L12 13 L12 6 L16 6 L16 13 L19 13 Z" fill="#f0ebe0"/>
  </svg>
  <svg class="abs" style="left:1263px;top:2px" width="23" height="18" viewBox="0 0 23 18">
    <path d="M11 5 L11 2 Q11 1 12 1 L15 1 L16 2 L18 2" fill="none" stroke="#f0ebe0" stroke-width="1"/>
    <rect x="1" y="5" width="20" height="12" rx="2" fill="none" stroke="#f0ebe0" stroke-width="1.4"/>
    <g fill="#f0ebe0"><rect x="4" y="7.5" width="2" height="2"/><rect x="7" y="7.5" width="2" height="2"/><rect x="10" y="7.5" width="2" height="2"/><rect x="13" y="7.5" width="2" height="2"/><rect x="16" y="7.5" width="2" height="2"/>
    <rect x="4" y="10.5" width="2" height="2"/><rect x="7" y="10.5" width="2" height="2"/><rect x="10" y="10.5" width="2" height="2"/><rect x="13" y="10.5" width="2" height="2"/><rect x="16" y="10.5" width="2" height="2"/>
    <rect x="5" y="13.5" width="12" height="1.6"/></g>
  </svg>
  <svg class="abs" style="left:1295px;top:7px" width="15" height="12" viewBox="0 0 15 12">
    <path d="M1 3.5 L4 3.5 L8 0.5 L8 11.5 L4 8.5 L1 8.5 Z" fill="#f0ebe0"/>
    <path d="M10.5 2.5 Q13 6 10.5 9.5" fill="none" stroke="#f0ebe0" stroke-width="1.5"/>
  </svg>
  <svg class="abs" style="left:1328px;top:5px" width="20" height="14" viewBox="0 0 20 14">
    <rect x="0" y="0.5" width="19" height="13" rx="1" fill="#f0ebe0"/>
    <path d="M0.8 1.5 L9.5 8.5 L18.2 1.5 M0.8 12.5 L6.5 6.5 M18.2 12.5 L12.5 6.5" fill="none" stroke="#3c3b36" stroke-width="1.1"/>
  </svg>
  <div class="ptxt" style="left:1359px">5<i class="j" style="width:13.2px">月</i> 2<i class="j" style="width:13.2px">日</i> (<i class="j" style="width:13.2px">月</i>) <i class="j" style="width:13.2px">午</i><i class="j" style="width:13.2px">後</i> 9:14</div>
  <div class="abs" style="left:1500px;top:0;width:1px;height:24px;background:#2e2d29"></div>
  <div class="abs" style="left:1501px;top:0;width:1px;height:24px;background:#5e5c55"></div>
  <svg class="abs" style="left:1512px;top:4px" width="19" height="17" viewBox="0 0 19 17">
    <path d="M8.5 1 A7.5 7.5 0 1 0 14 13.5 L18 15.5 L15.5 11.5 A7.5 7.5 0 0 0 8.5 1 Z" fill="#f0ebe0"/>
    <path d="M5.8 5.8 L11.2 11.2 M11.2 5.8 L5.8 11.2" stroke="#3c3b36" stroke-width="1.8"/>
  </svg>
  <div class="ptxt" style="left:1535px;letter-spacing:1.2px">june</div>
  <svg class="abs" style="left:1576px;top:4px" width="16" height="16" viewBox="0 0 16 16">
    <path d="M4.5 3.5 A6 6 0 1 0 11.5 3.5" fill="none" stroke="#f0ebe0" stroke-width="1.8"/>
    <path d="M8 0.5 L8 7.5" stroke="#f0ebe0" stroke-width="1.8"/>
  </svg>
</div>

<!-- bottom panel -->
<div id="botpanel" class="abs">
  <svg class="abs" style="left:1px;top:3px" width="22" height="19" viewBox="0 0 22 19">
    <defs><linearGradient id="sdg" x1="0" y1="0" x2="1" y2="1"><stop offset="0" stop-color="#a03ca0"/><stop offset="0.5" stop-color="#d060d0"/><stop offset="1" stop-color="#8a2a90"/></linearGradient></defs>
    <rect x="0.5" y="2" width="21" height="16" fill="url(#sdg)"/>
    <rect x="0.5" y="0.5" width="21" height="2" fill="#f4eef4"/>
    <rect x="2" y="7" width="3" height="2" fill="#e8c0e8"/><rect x="2" y="12" width="3" height="2" fill="#e8c0e8"/>
  </svg>
  <div class="abs" style="left:27px;top:9px;width:3px;height:1px;background:#2a2a26;box-shadow:0 2px 0 #2a2a26,0 4px 0 #2a2a26"></div>
  <div class="tb" style="left:35px;width:173px;background:linear-gradient(#4e4d48,#42413c)">
    <svg class="abs" style="left:4px;top:4px" width="16" height="15" viewBox="0 0 16 15">
      <rect x="0.5" y="0.5" width="15" height="14" rx="1.5" fill="#1a1a18" stroke="#d8d4cc" stroke-width="1"/>
      <path d="M3 4 L6 6 L3 8" fill="none" stroke="#f0f0f0" stroke-width="1"/><path d="M7 9.5 L11 9.5" stroke="#f0f0f0" stroke-width="1"/>
    </svg>
    <div class="ptxt" style="left:28px;top:3px;letter-spacing:1.05px">Terminal</div>
  </div>
  <div class="tb" style="left:211px;width:173px;background:linear-gradient(#74695d,#5e574d)">
    <svg class="abs" style="left:5px;top:4px" width="17" height="17" viewBox="0 0 17 17">
      <circle cx="8.5" cy="8.5" r="8" fill="#15838a"/>
      <circle cx="5.2" cy="8.5" r="2.6" fill="none" stroke="#f0f0f0" stroke-width="1.3"/>
      <circle cx="11.8" cy="8.5" r="2.6" fill="none" stroke="#f0f0f0" stroke-width="1.3"/>
      <path d="M4 8.5 L6.4 8.5 M10.6 8.5 L13 8.5 M11.8 7.3 L11.8 9.7" stroke="#f0f0f0" stroke-width="1"/>
    </svg>
    <div class="ptxt" style="left:29px;top:3px">LM73_test | Arduino...</div>
  </div>
  <div class="tb" style="left:387px;width:174px;background:linear-gradient(#45443f,#3b3a36)">
    <svg class="abs" style="left:4px;top:4px" width="16" height="16" viewBox="0 0 16 16">
      <rect x="0.5" y="0.5" width="15" height="15" fill="#eef0f6" stroke="#c8cad8" stroke-width="0.6"/>
      <path d="M8.5 3 Q10 4.5 8 6 Q6.5 7.5 8 9 M10 4.5 Q11 6 9.5 7.5" fill="none" stroke="#c87a30" stroke-width="1.3"/>
      <path d="M4 10 L10 10 M5 11.8 L9 11.8 M3.5 13.5 L11 13.5 M10.5 9.5 Q13 10.5 11 12.5" fill="none" stroke="#4a5468" stroke-width="1"/>
    </svg>
    <div class="ptxt" style="left:27px;top:3px;letter-spacing:1.05px">/dev/ttyUSB1</div>
  </div>
  <div class="abs" style="left:1454px;top:0;width:30px;height:24px;background:#7a7366"></div>
  <svg class="abs" style="left:1456px;top:3px" width="26" height="18" viewBox="0 0 26 18">
    <rect x="2" y="3" width="12" height="8" fill="#a8a090" stroke="#f4f0e8" stroke-width="1.2"/>
    <rect x="14" y="5" width="9" height="11" fill="#d8d0c4" stroke="#f4f0e8" stroke-width="1.2"/>
    <rect x="3" y="10" width="10" height="6" fill="#a8a090" stroke="#f4f0e8" stroke-width="1.2"/>
  </svg>
  <div class="abs" style="left:1484px;top:0;width:29px;height:24px;background:#2f2e2a"></div>
  <div class="abs" style="left:1514px;top:0;width:29px;height:24px;background:#2f2e2a"></div>
  <div class="abs" style="left:1544px;top:0;width:29px;height:24px;background:#2f2e2a"></div>
  <svg class="abs" style="left:1577px;top:1px" width="21" height="22" viewBox="0 0 21 22">
    <defs><linearGradient id="trg" x1="0" x2="1"><stop offset="0" stop-color="#9a9890"/><stop offset="0.5" stop-color="#e8e6e0"/><stop offset="1" stop-color="#8a8880"/></linearGradient></defs>
    <ellipse cx="10" cy="3" rx="8" ry="2" fill="#c8c6c0" stroke="#6a6860" stroke-width="0.6"/>
    <path d="M2 3 L4 20 Q10 22 16 20 L18 3 Q10 6 2 3 Z" fill="url(#trg)" stroke="#6a6860" stroke-width="0.6"/>
    <path d="M15 20 L20 15 L20 21 Z" fill="#f0f0f0"/>
  </svg>
</div>

<!-- Terminal window -->
<div class="win" style="left:212px;top:130px;width:659px;height:469px;background:#3c3b36;border-radius:6px 6px 3px 3px">
  <div class="titlebar" style="height:54px"></div>
  <div class="abs" style="left:0;top:53px;width:659px;height:1px;background:#463b3c"></div>
  <div class="btns" style="left:11px;top:5px;width:58px;height:19px"></div>
  <div class="wbtn ib" style="left:13px;top:7px"><svg width="15" height="15"><path d="M5 5 L10 10 M10 5 L5 10" stroke="#8e8b83" stroke-width="1.3"/></svg></div>
  <div class="wbtn ib" style="left:33px;top:7px"><svg width="15" height="15"><path d="M4 6 L7.5 9.5 L11 6" fill="none" stroke="#8e8b83" stroke-width="1.3"/></svg></div>
  <div class="wbtn ib" style="left:53px;top:7px"><svg width="15" height="15"><path d="M4 9 L7.5 5.5 L11 9" fill="none" stroke="#8e8b83" stroke-width="1.3"/></svg></div>
  <div class="ttl" style="left:83px;top:6px;color:#9e9a90;font-size:14px;letter-spacing:0.5px">Terminal</div>
  <div class="mtxt" style="left:6px"><i class="j" style="width:9.8px">フ</i><i class="j" style="width:9.8px">ァ</i><i class="j" style="width:9.8px">イ</i><i class="j" style="width:9.8px">ル</i>(F)</div><div class="mtxt" style="left:75px"><i class="j" style="width:11.8px">編</i><i class="j" style="width:11.8px">集</i>(E)</div><div class="mtxt" style="left:129px"><i class="j" style="width:12.3px">表</i><i class="j" style="width:12.3px">示</i>(V)</div><div class="mtxt" style="left:184px"><i class="j" style="width:12.1px">端</i><i class="j" style="width:12.1px">末</i>(T)</div><div class="mtxt" style="left:238px"><i class="j" style="width:12.0px">ヘ</i><i class="j" style="width:12.0px">ル</i><i class="j" style="width:12.0px">プ</i>(H)</div>
  <div class="abs" style="left:1px;top:54px;width:642px;height:409px;background:#300a24"></div><div class="abs mono" style="left:1px;top:55px;color:#f2f0ee;font-size:14px;line-height:17px;padding:1px 0 0 1px;transform:scaleX(0.9524);transform-origin:0 0">Experimental:  JNI_OnLoad called.
Stable Library
=========================================
Native lib Version = RXTX-2.1-7
Java lib Version   = RXTX-2.1-7










Binary sketch size: 4870 bytes (of a 14336 byte maximum)
Binary sketch size: 4870 bytes (of a 14336 byte maximum)
</div>
  <div class="abs" style="left:2px;top:344px;width:9px;height:18px;border:1px solid #f0f0f0"></div>
  <div class="abs" style="left:643px;top:54px;width:16px;height:409px;background:linear-gradient(90deg,#f6f4ee,#e8e4da)"></div>
  <div class="abs" style="left:644px;top:74px;width:14px;height:369px;border-radius:7px;border:1px solid #b8b2a4;background:linear-gradient(90deg,#fdfcfa,#f4f1ea 60%,#e2ddd0)"></div>
  <div class="abs" style="left:647px;top:256px;width:8px;height:1px;background:#9a958a;box-shadow:0 2px 0 #9a958a,0 4px 0 #9a958a"></div>
  <svg class="abs" style="left:647px;top:62px" width="8" height="6"><path d="M4 0.5 L7.5 5.5 L0.5 5.5 Z" fill="#aca69a"/></svg>
  <svg class="abs" style="left:647px;top:452px" width="8" height="6"><path d="M4 5.5 L7.5 0.5 L0.5 0.5 Z" fill="#aca69a"/></svg>
  <div class="abs" style="left:0;top:463px;width:659px;height:6px;background:#efebe2"></div>
  <div class="abs" style="left:0;top:54px;width:1px;height:409px;background:#6a5a60"></div>
</div>

<!-- Serial monitor window -->
<div class="win" style="left:268px;top:612px;width:588px;height:329px;background:#edeae3;border-radius:6px 6px 4px 4px">
  <div class="titlebar" style="height:27px"></div>
  <div class="btns" style="left:11px;top:5px;width:58px;height:19px"></div>
  <div class="wbtn ib" style="left:12px;top:7px"><svg width="15" height="15"><path d="M5 5 L10 10 M10 5 L5 10" stroke="#8e8b83" stroke-width="1.3"/></svg></div>
  <div class="wbtn ib" style="left:32px;top:7px"><svg width="15" height="15"><path d="M4 6 L7.5 9.5 L11 6" fill="none" stroke="#8e8b83" stroke-width="1.3"/></svg></div>
  <div class="wbtn ib" style="left:52px;top:7px"><svg width="15" height="15"><path d="M4 9 L7.5 5.5 L11 9" fill="none" stroke="#8e8b83" stroke-width="1.3"/></svg></div>
  <div class="ttl" style="left:82px;top:6px;color:#a9a59b;font-size:14px;letter-spacing:0.8px">/dev/ttyUSB1</div>
  <div class="abs" style="left:0;top:27px;width:1px;height:302px;background:#c9c2b6"></div>
  <div class="abs" style="left:6px;top:32px;width:528px;height:27px;background:#fff;border:1px solid #a8a192;border-radius:3px;box-shadow:inset 0 1px 1px rgba(0,0,0,0.08)"></div>
  <div class="abs" style="left:540px;top:32px;width:43px;height:27px;border:1px solid #8a8170;border-radius:3px;background:linear-gradient(#cec5b4,#ada390)"></div>
  <div class="abs stxt" style="left:545px;top:37px;color:#403c38;letter-spacing:0.3px">Send</div>
  <div class="abs" style="left:1px;top:64px;width:587px;height:1px;background:#d2ccc0"></div>
  <div class="abs" style="left:1px;top:65px;width:571px;height:224px;background:#fff"></div><div class="abs mono" style="left:1px;top:66px;color:#474747;font-size:12.5px;line-height:14px;padding:1px 0 0 1px;transform:scaleX(0.9333);transform-origin:0 0">Current temperature is 24.96 C.
Current temperature is 24.93 C.
Current temperature is 24.96 C.
Current temperature is 24.96 C.
Current temperature is 24.93 C.
Current temperature is 24.93 C.
Current temperature is 24.93 C.
Current temperature is 24.93 C.
Current temperature is 24.93 C.
Current temperature is 24.93 C.
Current temperature is 24.90 C.
Current temperature is 24.93 C.
Current temperature is 24.93 C.
Current temperature is 24.87 C.
Current temperature is 24.90 C.</div>
  <div class="abs" style="left:572px;top:65px;width:16px;height:224px;background:linear-gradient(90deg,#ebe7df,#f6f4ef 50%,#e4dfd4)"></div>
  <div class="abs" style="left:573px;top:200px;width:14px;height:69px;border-radius:7px;border:1px solid #b8b2a4;background:linear-gradient(90deg,#fdfcfa,#f4f1ea 60%,#e2ddd0)"></div>
  <div class="abs" style="left:576px;top:232px;width:8px;height:1px;background:#9a958a;box-shadow:0 2px 0 #9a958a,0 4px 0 #9a958a"></div>
  <svg class="abs" style="left:576px;top:72px" width="8" height="7"><path d="M4 0.5 L7.5 6 L0.5 6 Z" fill="#77736a"/></svg>
  <svg class="abs" style="left:576px;top:277px" width="8" height="7"><path d="M4 6 L7.5 0.5 L0.5 0.5 Z" fill="#77736a"/></svg>
  <div class="abs" style="left:1px;top:289px;width:587px;height:1px;background:#cfc9bd"></div>
  <div class="abs" style="left:8px;top:301px;width:12px;height:12px;border-radius:2px;border:1px solid #b04a3c;background:linear-gradient(#f4a090,#e0604a)"></div>
  <svg class="abs" style="left:8px;top:300px" width="14" height="14"><path d="M3 7.5 L5.5 10.5 L10.5 3" fill="none" stroke="#2a1a18" stroke-width="1.8"/></svg>
  <div class="abs stxt" style="left:27px;top:299px;letter-spacing:0.5px">Autoscroll</div>
  <div class="abs" style="left:322px;top:295px;width:132px;height:25px;border:1px solid #a69e8e;border-radius:3px;background:#fff;overflow:hidden">
    <div class="abs" style="left:106px;top:0;width:25px;height:23px;background:linear-gradient(#bdb4a2,#9e9482);border-left:1px solid #958c7a"></div>
    <svg class="abs" style="left:113px;top:8px" width="11" height="9"><path d="M0.5 0.5 L10.5 0.5 L5.5 8.5 Z" fill="#5e574c"/></svg>
  </div>
  <div class="abs stxt" style="left:326px;top:299px;letter-spacing:0.6px">No line ending</div>
  <div class="abs" style="left:464px;top:295px;width:119px;height:25px;border:1px solid #a69e8e;border-radius:3px;background:#fff;overflow:hidden">
    <div class="abs" style="left:93px;top:0;width:25px;height:23px;background:linear-gradient(#bdb4a2,#9e9482);border-left:1px solid #958c7a"></div>
    <svg class="abs" style="left:100px;top:8px" width="11" height="9"><path d="M0.5 0.5 L10.5 0.5 L5.5 8.5 Z" fill="#5e574c"/></svg>
  </div>
  <div class="abs stxt" style="left:469px;top:299px;letter-spacing:0.5px">9600 baud</div>
</div>

<!-- Arduino window -->
<div class="win" style="left:887px;top:279px;width:498px;height:599px;background:#ede9e1;border-radius:6px 6px 4px 4px">
  <div class="titlebar" style="height:53px;background:linear-gradient(#5e5d55 0px,#45443e 10px,#3c3b36 22px,#3c3b36 100%)"></div>
  <div class="btns" style="left:9px;top:5px;width:60px;height:19px;background:linear-gradient(#1e1d1a,#3a3934)"></div>
  <div class="wbtn" style="left:11px;top:6px;width:16px;height:16px;background:radial-gradient(circle at 50% 35%,#f79a6e,#e2602e 60%,#c04818);box-shadow:0 0 0 0.5px #5a2a10"><svg width="16" height="16"><path d="M5.3 5.3 L10.7 10.7 M10.7 5.3 L5.3 10.7" stroke="#3a1a0e" stroke-width="1.3"/></svg></div>
  <div class="wbtn" style="left:31px;top:6px;width:16px;height:16px;background:radial-gradient(circle at 50% 35%,#fbfaf6,#e6e2d8 60%,#c8c2b4)"><svg width="16" height="16"><path d="M4.5 6.5 L8 10 L11.5 6.5" fill="none" stroke="#5a5750" stroke-width="1.4"/></svg></div>
  <div class="wbtn" style="left:51px;top:6px;width:16px;height:16px;background:radial-gradient(circle at 50% 35%,#fbfaf6,#e6e2d8 60%,#c8c2b4)"><svg width="16" height="16"><path d="M4.5 9.5 L8 6 L11.5 9.5" fill="none" stroke="#5a5750" stroke-width="1.4"/></svg></div>
  <div class="ttl" style="left:81px;top:6px;color:#e4e0d6;font-size:14px;letter-spacing:0.86px">LM73_test | Arduino 0022</div>
  <div class="mtxt" style="left:3px;top:32px;color:#dedad2">File</div><div class="mtxt" style="left:30px;top:32px;color:#dedad2">Edit</div><div class="mtxt" style="left:61px;top:32px;color:#dedad2">Sketch</div><div class="mtxt" style="left:112px;top:32px;color:#dedad2">Tools</div><div class="mtxt" style="left:151px;top:32px;color:#dedad2">Help</div>
  <div class="abs" style="left:0;top:52px;width:498px;height:34px;background:linear-gradient(#2e4048 0px,#104a64 2px,#06506f 4px,#06506f 100%)"></div>
  <svg class="abs" style="left:0;top:53px" width="210" height="33" viewBox="0 0 210 33" fill="none" stroke="#dff2f8" stroke-width="1.1">
    <circle cx="16.5" cy="17" r="11"/>
    <path d="M13.8 13.5 L21.4 17.5 L13.8 21.3 Z"/>
    <circle cx="43.5" cy="17" r="11"/>
    <rect x="40" y="14" width="7" height="7"/>
    <rect x="66.5" y="7" width="20" height="20.5"/>
    <path d="M71.5 10.5 L78 10.5 L81.5 14 L81.5 23.5 L71.5 23.5 Z M78 10.5 L78 14 L81.5 14"/>
    <rect x="93.5" y="7" width="20" height="20.5"/>
    <path d="M103.5 10 L109 15.5 L106 15.5 L106 20.5 L101 20.5 L101 15.5 L98 15.5 Z M97.5 24 L109.5 24"/>
    <rect x="120.5" y="7" width="20" height="20.5"/>
    <path d="M130.5 21.5 L125 16 L128 16 L128 10.5 L133 10.5 L133 16 L136 16 Z M124.5 24 L136.5 24"/>
    <rect x="147.5" y="7" width="20" height="20.5"/>
    <path d="M150 14 L155.5 14 L155.5 11 L160.5 17 L155.5 23 L155.5 20 L150 20 Z"/>
    <path d="M163.5 10 L163.5 25" stroke-dasharray="1.2 1.3" stroke-width="1.3"/>
    <rect x="179.5" y="7" width="20" height="20.5"/>
    <circle cx="189.5" cy="11" r="1.8"/>
    <path d="M189.5 13 L189.5 16.5 M183 16.5 L196 16.5 L196 24 L183 24 Z"/>
  </svg>
  <div class="abs" style="left:0;top:86px;width:498px;height:32px;background:linear-gradient(#1c5a78 0px,#226887 2px,#226887 29px,#2a5f70 31px,#2a5f70 32px)"></div>
  <div class="abs" style="left:6px;top:92px;width:92px;height:26px;background:#5b98ab;border-radius:3px 3px 0 0"></div>
  <div class="abs mono" style="left:20px;top:97px;font-size:12.5px;line-height:16px;color:#10242c;letter-spacing:-0.45px">LM73_test</div>
  <svg class="abs" style="left:464px;top:94px" width="18" height="18" viewBox="0 0 18 18" fill="none" stroke="#dff2f8" stroke-width="1.1">
    <rect x="0.5" y="0.5" width="17" height="17"/>
    <path d="M3.5 7 L8 7 L8 4 L13 9 L8 14 L8 11 L3.5 11 Z"/>
  </svg>
  <div class="abs" style="left:0;top:118px;width:478px;height:336px;background:#fff;overflow:hidden">
    <div class="abs mono code" style="left:6px;top:0px;font-size:13.33px;line-height:15px;color:#000;transform:scaleX(0.875);transform-origin:0 0">#define LM73_ADDR 0x4c          <span class="c">/* 2b01001100 */</span>

<span class="k">int</span> ret;

<span class="k">void</span> <span class="b">setup</span>()                    <span class="c">/* Initialize I2C device */</span>
{
  <span class="f">Wire</span>.<span class="f">begin</span>();
  <span class="b">Serial</span>.<span class="f">begin</span>(9600);
  <span class="f">delay</span>(1000); <span class="c">/* for debug */</span>

  <span class="f">Wire</span>.<span class="f">beginTransmission</span>(LM73_ADDR);
  <span class="f">Wire</span>.<span class="f">send</span>((<span class="k">byte</span>)0x04);  <span class="c">/* Select Control Status Register */</span>
  <span class="f">Wire</span>.<span class="f">send</span>(0x60);        <span class="c">/* Set 14 bits mode */</span>
  ret=<span class="f">Wire</span>.<span class="f">endTransmission</span>();

  <span class="f">Wire</span>.<span class="f">beginTransmission</span>(LM73_ADDR);
  <span class="f">Wire</span>.<span class="f">send</span>(0x00);        <span class="c">/* Setup Temp-Register for next comm */</span>
  ret=<span class="f">Wire</span>.<span class="f">endTransmission</span>();
  <span class="f">delay</span>(100); <span class="c">/* 0.1 Sec interval for next read */</span>

}

<span class="k">void</span> <span class="b">loop</span>()                     <span class="c">/* run over and over again */</span></div>
    <div class="abs" style="left:419px;top:60px;width:1px;height:13px;background:#000"></div>
  </div>
  <div class="abs" style="left:478px;top:118px;width:20px;height:336px;background:linear-gradient(90deg,#e8e3d8,#f6f4ef 50%,#ebe7df)"></div>
  <div class="abs" style="left:480px;top:120px;width:16px;height:331px;border-radius:8px;background:linear-gradient(90deg,#ded8cc,#f0ece4 50%,#ded8cc);opacity:0.6"></div>
  <div class="abs" style="left:480px;top:211px;width:15px;height:62px;border-radius:7px;border:1px solid #b8b2a4;background:linear-gradient(90deg,#fdfcfa,#f4f1ea 60%,#e2ddd0)"></div>
  <div class="abs" style="left:484px;top:240px;width:8px;height:1px;background:#9a958a;box-shadow:0 2px 0 #9a958a,0 4px 0 #9a958a"></div>
  <svg class="abs" style="left:484px;top:127px" width="8" height="7"><path d="M4 0.5 L7.5 6 L0.5 6 Z" fill="#77736a"/></svg>
  <svg class="abs" style="left:484px;top:438px" width="8" height="7"><path d="M4 6 L7.5 0.5 L0.5 0.5 Z" fill="#77736a"/></svg>
  <div class="abs" style="left:0;top:454px;width:478px;height:19px;background:linear-gradient(#f6f4ef,#ebe7df)"></div>
  <div class="abs" style="left:22px;top:456px;width:390px;height:15px;border-radius:7px;border:1px solid #b8b2a4;background:linear-gradient(#fdfcfa,#f4f1ea 60%,#e2ddd0)"></div>
  <div class="abs" style="left:215px;top:460px;width:1px;height:6px;background:#aaa496;box-shadow:3px 0 0 #aaa496,6px 0 0 #aaa496"></div>
  <svg class="abs" style="left:10px;top:460px" width="7" height="8"><path d="M0.5 4 L6 0.5 L6 7.5 Z" fill="#77736a"/></svg>
  <svg class="abs" style="left:463px;top:460px" width="7" height="8"><path d="M6.5 4 L1 0.5 L1 7.5 Z" fill="#77736a"/></svg>
  <div class="abs" style="left:0;top:473px;width:498px;height:7px;background:#ede9e1"></div>
  <div class="abs" style="left:246px;top:475px;width:1px;height:3px;background:#c8c2b6;box-shadow:2px 0 0 #c8c2b6,4px 0 0 #c8c2b6"></div>
  <div class="abs" style="left:0;top:480px;width:498px;height:33px;background:#5592a2"></div>
  <div class="abs stxt" style="left:6px;top:489px;color:#0e1a20;letter-spacing:0.35px">Done Saving.</div>
  <div class="abs" style="left:0;top:513px;width:498px;height:62px;background:#ede9e1"></div>
  <div class="abs" style="left:1px;top:514px;width:497px;height:60px;background:#000"></div><div class="abs mono" style="left:4px;top:518px;color:#d2d0ca;font-size:12.5px;line-height:15px;transform:scaleX(0.9333);transform-origin:0 0">Binary sketch size: 4870 bytes (of a 14336 byte maximum)</div>
  <div class="abs" style="left:0;top:575px;width:498px;height:20px;background:#06506f"></div>
  <div class="abs" style="left:7px;top:581px;font-size:10px;line-height:13px;color:#e8f8fa;letter-spacing:0.3px">30</div>
  <div class="abs" style="left:0;top:595px;width:498px;height:4px;background:#efebe2"></div>
</div>

<!-- mouse cursor -->
<svg class="abs" style="left:1499px;top:428px" width="14" height="20" viewBox="0 0 14 20">
  <path d="M1 1 L1 16 L4.5 12.5 L7 18.5 L9.5 17.5 L7 11.5 L12 11.5 Z" fill="#f8f8f8" stroke="#111" stroke-width="1.1" stroke-linejoin="round"/>
</svg>

</body></html>
